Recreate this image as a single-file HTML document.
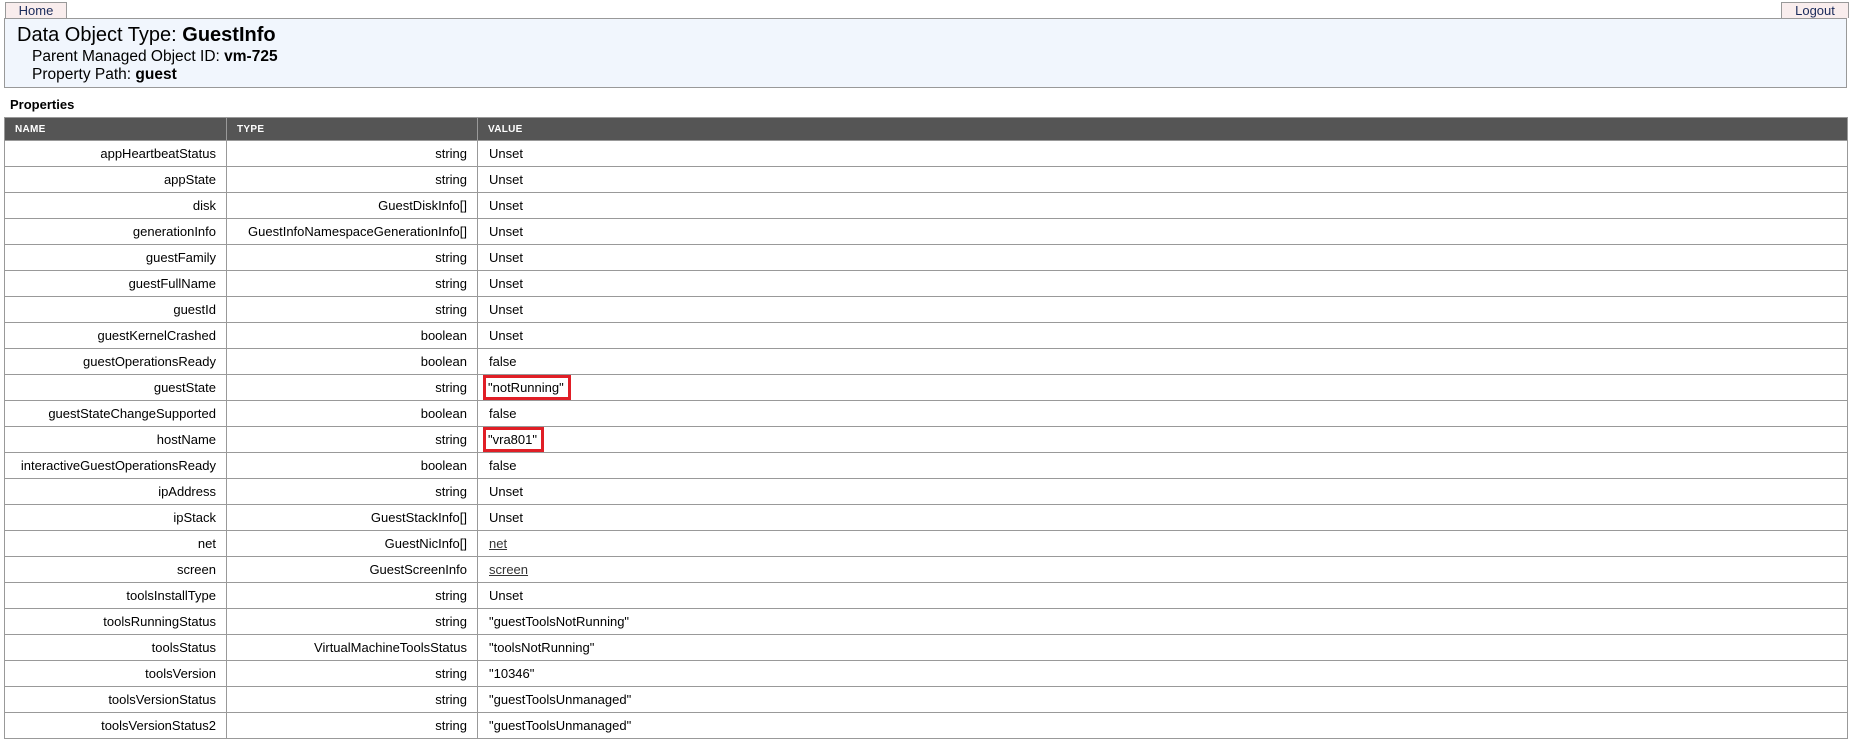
<!DOCTYPE html>
<html><head><meta charset="utf-8"><style>
body{margin:0;background:#fff;font-family:"Liberation Sans",Tahoma,sans-serif;color:#000;width:1854px;height:745px;overflow:hidden;position:relative}
.btn{position:absolute;top:2px;height:15px;background:#f9eded;border:1px solid #999;border-bottom:none;font-size:13px;line-height:16px;text-align:center;color:#1a2a5a}
.hdr{position:absolute;left:4px;top:18px;width:1841px;height:68px;background:#f1f6fd;border:1px solid #999}
.t{position:absolute;left:12px;top:5px;font-size:20px;white-space:nowrap}
.s{position:absolute;left:27px;font-size:15.5px;white-space:nowrap}
.p{position:absolute;left:10px;top:97px;font-size:13px;font-weight:bold}
table{position:absolute;left:4px;top:117px;border-collapse:collapse;width:1844px;font-size:13px;table-layout:fixed}
td,th{border:1px solid #999;height:25px;padding:0 10px;white-space:nowrap;overflow:hidden}
th{background:#555;color:#fff;font-size:10px;text-align:left;height:22px;letter-spacing:.3px}
td.n,td.ty{text-align:right}
td.v{padding-left:11px}
.r{outline:3px solid #e01e26;outline-offset:0;padding:2px 4px 2px 2px;margin-left:-3px}
a{color:#333;text-decoration:underline}
</style></head><body>
<div class="btn" style="left:5px;width:60px">Home</div>
<div class="btn" style="left:1781px;width:66px">Logout</div>
<div class="hdr">
<div class="t">Data Object Type: <b>GuestInfo</b></div>
<div class="s" style="top:29px">Parent Managed Object ID: <b>vm-725</b></div>
<div class="s" style="top:47px">Property Path: <b>guest</b></div>
</div>
<div class="p">Properties</div>
<table>
<colgroup><col style="width:222px"><col style="width:251px"><col></colgroup>
<tr><th>NAME</th><th>TYPE</th><th>VALUE</th></tr>
<tr><td class="n">appHeartbeatStatus</td><td class="ty">string</td><td class="v">Unset</td></tr>
<tr><td class="n">appState</td><td class="ty">string</td><td class="v">Unset</td></tr>
<tr><td class="n">disk</td><td class="ty">GuestDiskInfo[]</td><td class="v">Unset</td></tr>
<tr><td class="n">generationInfo</td><td class="ty">GuestInfoNamespaceGenerationInfo[]</td><td class="v">Unset</td></tr>
<tr><td class="n">guestFamily</td><td class="ty">string</td><td class="v">Unset</td></tr>
<tr><td class="n">guestFullName</td><td class="ty">string</td><td class="v">Unset</td></tr>
<tr><td class="n">guestId</td><td class="ty">string</td><td class="v">Unset</td></tr>
<tr><td class="n">guestKernelCrashed</td><td class="ty">boolean</td><td class="v">Unset</td></tr>
<tr><td class="n">guestOperationsReady</td><td class="ty">boolean</td><td class="v">false</td></tr>
<tr><td class="n">guestState</td><td class="ty">string</td><td class="v"><span class="r">"notRunning"</span></td></tr>
<tr><td class="n">guestStateChangeSupported</td><td class="ty">boolean</td><td class="v">false</td></tr>
<tr><td class="n">hostName</td><td class="ty">string</td><td class="v"><span class="r">"vra801"</span></td></tr>
<tr><td class="n">interactiveGuestOperationsReady</td><td class="ty">boolean</td><td class="v">false</td></tr>
<tr><td class="n">ipAddress</td><td class="ty">string</td><td class="v">Unset</td></tr>
<tr><td class="n">ipStack</td><td class="ty">GuestStackInfo[]</td><td class="v">Unset</td></tr>
<tr><td class="n">net</td><td class="ty">GuestNicInfo[]</td><td class="v"><a>net</a></td></tr>
<tr><td class="n">screen</td><td class="ty">GuestScreenInfo</td><td class="v"><a>screen</a></td></tr>
<tr><td class="n">toolsInstallType</td><td class="ty">string</td><td class="v">Unset</td></tr>
<tr><td class="n">toolsRunningStatus</td><td class="ty">string</td><td class="v">"guestToolsNotRunning"</td></tr>
<tr><td class="n">toolsStatus</td><td class="ty">VirtualMachineToolsStatus</td><td class="v">"toolsNotRunning"</td></tr>
<tr><td class="n">toolsVersion</td><td class="ty">string</td><td class="v">"10346"</td></tr>
<tr><td class="n">toolsVersionStatus</td><td class="ty">string</td><td class="v">"guestToolsUnmanaged"</td></tr>
<tr><td class="n">toolsVersionStatus2</td><td class="ty">string</td><td class="v">"guestToolsUnmanaged"</td></tr>
</table>
</body></html>
